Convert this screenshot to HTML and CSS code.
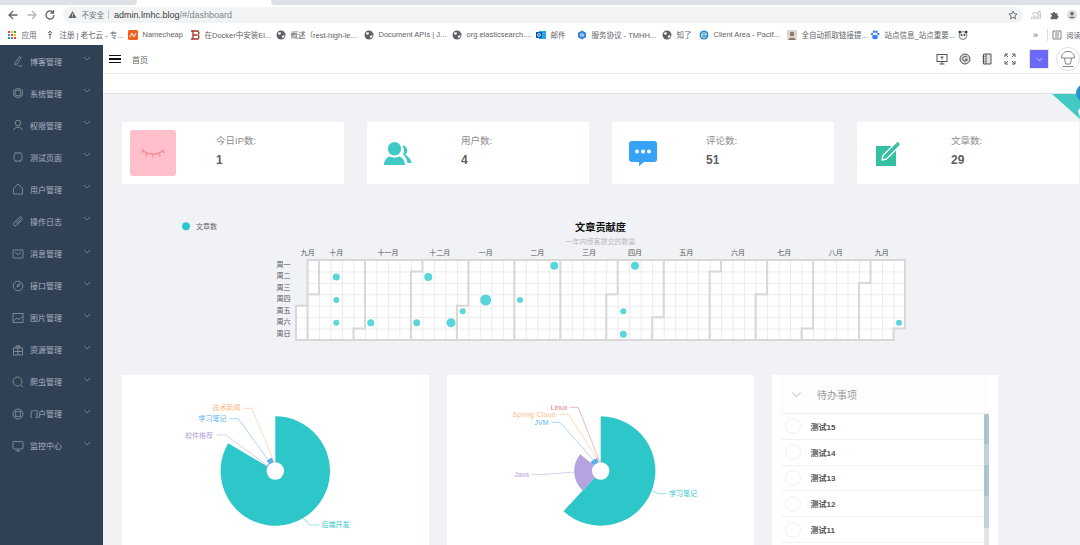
FILE: index.html
```html
<!DOCTYPE html>
<html lang="zh-CN">
<head>
<meta charset="utf-8">
<title>dashboard</title>
<link rel="stylesheet" href="styles.css">
</head>
<body>
<svg class="defs" width="0" height="0" aria-hidden="true">
  <symbol id="globe" viewBox="0 0 10 10"><circle cx="5" cy="5" r="4.5" fill="#5f6368"/><path d="M2 3l2-1 1 1-1 2-2-1zM6 6l2-1 .5 1.5L6.500 8.500z" fill="#fff"/></symbol>
  <symbol id="chev" viewBox="0 0 8 5"><path d="M1 1l3 3 3-3" fill="none" stroke="currentColor" stroke-width=".8"/></symbol>
</svg>

<div class="tabs"><div class="tab-off left"></div><div class="tab-on"></div><div class="tab-off right"></div></div>

<div class="toolbar">
  <svg class="nav" viewBox="0 0 12 12"><path d="M10.500 6H2M6 2 2 6l4 4" fill="none" stroke="#5f6368" stroke-width="1.300"/></svg>
  <svg class="nav" viewBox="0 0 12 12"><path d="M1.500 6H10M6 2l4 4-4 4" fill="none" stroke="#b4b7bb" stroke-width="1.300"/></svg>
  <svg class="nav" viewBox="0 0 12 12"><path d="M10 6a4 4 0 1 1-1.200-2.900M9.500 1v3h-3" fill="none" stroke="#5f6368" stroke-width="1.300"/></svg>
  <div class="omni">
    <svg class="warn" viewBox="0 0 10 10"><path d="M5 1l4.500 8h-9z" fill="#5f6368"/><path d="M5 4v2.500M5 7.300v.8" stroke="#fff" stroke-width=".8"/></svg>
    <span class="insecure">不安全</span><span class="url-sep"></span>
    <span class="url"><b>admin.lmhc.blog</b>/#/dashboard</span>
    <svg class="star" viewBox="0 0 10 10"><path d="M5 1l1.200 2.700 2.900.3-2.200 1.900.7 2.900L5 7.300 2.400 8.800l.7-2.900L.9 4l2.900-.3z" fill="none" stroke="#5f6368" stroke-width=".9"/></svg>
  </div>
  <svg class="ext" viewBox="0 0 12 12"><path d="M1 11V8M3.500 11V6M6 11V7M8.500 11V4M11 11V2M1 5l3-2 3 1 4-3" fill="none" stroke="#9aa0a6" stroke-width=".9"/></svg>
  <svg class="ext" viewBox="0 0 12 12"><path d="M2 4h2.500a1.500 1.500 0 0 1 3 0H10v2.500a1.500 1.500 0 0 1 0 3V11H2V8.500a1.500 1.500 0 0 0 0-3z" fill="#5f6368"/></svg>
  <svg class="ext" viewBox="0 0 12 12"><circle cx="6" cy="6" r="6" fill="#dadce0"/><circle cx="6" cy="4.500" r="2" fill="#5f6368"/><path d="M2.500 9.500c.5-2 6.500-2 7 0z" fill="#5f6368"/></svg>
</div>

<div class="bookmarks">
  <div class="bm"><svg class="bi" viewBox="0 0 10 10"><path d="M1 1h2v2H1z" fill="#ea4335"/><path d="M4 1h2v2H4z" fill="#fbbc04"/><path d="M7 1h2v2H7z" fill="#34a853"/><path d="M1 4h2v2H1z" fill="#4285f4"/><path d="M4 4h2v2H4z" fill="#ea4335"/><path d="M7 4h2v2H7z" fill="#fbbc04"/><path d="M1 7h2v2H1z" fill="#34a853"/><path d="M4 7h2v2H4z" fill="#4285f4"/><path d="M7 7h2v2H7z" fill="#ea4335"/></svg><span>应用</span></div>
  <div class="bm"><svg class="bi" viewBox="0 0 10 10"><path d="M5 1v8M3 3l2-2 2 2M3.500 4.500h3" fill="none" stroke="#666" stroke-width=".9"/></svg><span>注册 | 老七云 - 专...</span></div>
  <div class="bm"><svg class="bi" viewBox="0 0 10 10"><rect width="10" height="10" rx="1.500" fill="#f4601c"/><path d="M2 7l2-4 2 4 2-4" fill="none" stroke="#fff" stroke-width="1"/></svg><span>Namecheap</span></div>
  <div class="bm"><svg class="bi" viewBox="0 0 10 10"><path d="M1 1h7l1 2-1 2 1 2-1 2H1M3 1v8M3 5h4" fill="none" stroke="#a5332a" stroke-width="1.300"/></svg><span>在Docker中安装El...</span></div>
  <div class="bm"><svg class="bi"><use href="#globe"/></svg><span>概述（rest-high-le...</span></div>
  <div class="bm"><svg class="bi"><use href="#globe"/></svg><span>Document APIs | J...</span></div>
  <div class="bm"><svg class="bi"><use href="#globe"/></svg><span>org.elasticsearch....</span></div>
  <div class="bm"><svg class="bi" viewBox="0 0 10 10"><rect x="3" y="1" width="7" height="8" fill="#28a8ea"/><rect y="2" width="6" height="6" fill="#0a5ea8"/><circle cx="3" cy="5" r="1.400" fill="none" stroke="#fff" stroke-width=".8"/></svg><span>邮件</span></div>
  <div class="bm"><svg class="bi" viewBox="0 0 10 10"><path d="M5 .5l4 2.200v4.600L5 9.500 1 7.300V2.700z" fill="#3b82d8"/><path d="M5 3l2 1v2L5 7 3 6V4z" fill="#9cc6f2"/></svg><span>服务协议 - TMHH...</span></div>
  <div class="bm"><svg class="bi"><use href="#globe"/></svg><span>知了</span></div>
  <div class="bm"><svg class="bi" viewBox="0 0 10 10"><circle cx="5" cy="5" r="4.500" fill="#2d8fc7"/><path d="M2.500 5h5M7.500 5a2.500 2.500 0 1 0-.8 2" fill="none" stroke="#fff" stroke-width=".9"/></svg><span>Client Area - Pacif...</span></div>
  <div class="bm"><svg class="bi" viewBox="0 0 10 10"><rect width="10" height="10" fill="#ddd5cf"/><circle cx="5" cy="4" r="2.200" fill="#8f7468"/><path d="M1.500 10c0-3 7-3 7 0z" fill="#8f7468"/></svg><span>全自动抓取链接提...</span></div>
  <div class="bm"><svg class="bi" viewBox="0 0 10 10"><g fill="#3d7ff5"><circle cx="2" cy="4" r="1.200"/><circle cx="4" cy="1.800" r="1.200"/><circle cx="6.500" cy="1.800" r="1.200"/><circle cx="8.300" cy="4" r="1.200"/><ellipse cx="5" cy="7" rx="2.800" ry="2.300"/></g></svg><span>站点信息_站点重要...</span></div>
  <div class="bm"><svg class="bi" viewBox="0 0 10 10"><circle cx="5" cy="5.500" r="4" fill="#eee" stroke="#555" stroke-width=".7"/><circle cx="1.800" cy="2" r="1.300" fill="#333"/><circle cx="8.200" cy="2" r="1.300" fill="#333"/><circle cx="3.500" cy="5" r=".9" fill="#333"/><circle cx="6.500" cy="5" r=".9" fill="#333"/></svg></div>
  <div class="bm more">»</div>
  <div class="bm-sep"></div>
  <div class="bm reader"><svg class="bi" viewBox="0 0 10 10"><path d="M1 1h8v8H1zM3 3h4M3 5h4M3 7h4" fill="none" stroke="#5f6368" stroke-width=".8"/></svg><span>阅读</span></div>
</div>

<div class="app">
  <nav class="sidebar">
    <a class="item"><svg class="mi" viewBox="0 0 12 12"><path d="M3 8l4.500-6.500 1.600 1.100L5 9l-2 1zM6 11h4" /></svg><span>博客管理</span><svg class="ch"><use href="#chev"/></svg></a>
    <a class="item"><svg class="mi" viewBox="0 0 12 12"><path d="M6 1l4.300 2.500v5L6 11 1.700 8.500v-5z"/><circle cx="6" cy="6" r="3"/></svg><span>系统管理</span><svg class="ch"><use href="#chev"/></svg></a>
    <a class="item"><svg class="mi" viewBox="0 0 12 12"><circle cx="6" cy="4" r="2.800"/><path d="M1.500 11c.5-3.500 8.500-3.500 9 0"/></svg><span>权限管理</span><svg class="ch"><use href="#chev"/></svg></a>
    <a class="item"><svg class="mi" viewBox="0 0 12 12"><rect x="2" y="2" width="8" height="8" rx="2.500"/><path d="M4 .8v1.200M8 .8v1.200M4 10v1.200M8 10v1.200"/></svg><span>测试页面</span><svg class="ch"><use href="#chev"/></svg></a>
    <a class="item"><svg class="mi" viewBox="0 0 12 12"><path d="M1.500 5.500L6 1l4.500 4.500V11h-9z"/></svg><span>用户管理</span><svg class="ch"><use href="#chev"/></svg></a>
    <a class="item"><svg class="mi" viewBox="0 0 12 12"><path d="M2 8l5-5.500a1.800 1.800 0 0 1 2.600 2.500L4.500 10.300A1.500 1.500 0 0 1 2 8zM4 8l4-4.500M5.500 9L9 5"/></svg><span>操作日志</span><svg class="ch"><use href="#chev"/></svg></a>
    <a class="item"><svg class="mi" viewBox="0 0 12 12"><rect x="1" y="2" width="10" height="8" rx=".5"/><path d="M3 4.500l3 2 3-2"/></svg><span>消息管理</span><svg class="ch"><use href="#chev"/></svg></a>
    <a class="item"><svg class="mi" viewBox="0 0 12 12"><circle cx="6" cy="6" r="4.800"/><path d="M5 7l.8-2.500L8 3.500 7.200 6z"/></svg><span>接口管理</span><svg class="ch"><use href="#chev"/></svg></a>
    <a class="item"><svg class="mi" viewBox="0 0 12 12"><rect x="1" y="1.500" width="10" height="9"/><path d="M1.500 9L5 6l2 1.500 3.500-3"/></svg><span>图片管理</span><svg class="ch"><use href="#chev"/></svg></a>
    <a class="item"><svg class="mi" viewBox="0 0 12 12"><rect x="1.500" y="4" width="9" height="7"/><path d="M4 4V2h4v2M6 1.500V11M1.500 7.500h9"/></svg><span>资源管理</span><svg class="ch"><use href="#chev"/></svg></a>
    <a class="item"><svg class="mi" viewBox="0 0 12 12"><circle cx="5.500" cy="5.500" r="4.500"/><path d="M9 9l2 2"/></svg><span>爬虫管理</span><svg class="ch"><use href="#chev"/></svg></a>
    <a class="item"><svg class="mi" viewBox="0 0 12 12"><circle cx="6" cy="6" r="5"/><circle cx="6" cy="6" r="2.800"/><path d="M2.500 2.500l1.500 1.500M9.500 2.500L8 4M2.500 9.500L4 8M9.500 9.500L8 8"/></svg><span>门户管理</span><svg class="ch"><use href="#chev"/></svg></a>
    <a class="item"><svg class="mi" viewBox="0 0 12 12"><rect x="1" y="1.500" width="10" height="7.500" rx="1"/><path d="M6 9v2M3.500 11h5"/></svg><span>监控中心</span><svg class="ch"><use href="#chev"/></svg></a>
  </nav>

  <main class="main">
    <header class="topbar">
      <div class="burger"><i></i><i></i><i></i></div>
      <span class="crumb">首页</span>
      <div class="tools">
        <svg class="tool" viewBox="0 0 12 12"><rect x="1" y="1.500" width="10" height="7" /><path d="M6 8.500V11M3.500 11h5M4.500 4h3M6 4v2.500"/></svg>
        <svg class="tool" viewBox="0 0 12 12"><circle cx="6" cy="6" r="5" fill="#d8d8d8"/><path d="M8 4.300A2.400 2.400 0 1 0 8.400 6.300H6"/></svg>
        <svg class="tool" viewBox="0 0 12 12"><path d="M2.500 1h7.500v10H2.500z" fill="#e4e4e4"/><path d="M1.500 3.500h2M1.500 6h2M1.500 8.500h2M5 1v10"/></svg>
        <svg class="tool" viewBox="0 0 12 12"><path d="M1 4V1h3M4 4L1.500 1.500M8 1h3v3M8 4l2.500-2.500M1 8v3h3M4 8l-2.500 2.500M11 8v3H8M8 8l2.500 2.500"/></svg>
        <div class="drop"><svg class="drop-ch"><use href="#chev"/></svg></div>
        <svg class="avatar" viewBox="0 0 24 24"><circle cx="12" cy="12" r="11.500" fill="#fff" stroke="#d8d8d8" stroke-width=".8"/><path d="M5.500 11C6 5.500 9 4.500 12 4.500s6 1 6.500 6.500zM8.500 11l1 6h5l1-6M6.500 19.500h11" fill="none" stroke="#777" stroke-width=".9"/></svg>
      </div>
    </header>
    <div class="tagsbar"></div>

    <svg class="corner" viewBox="0 0 28 40"><path d="M0 11h28v25z" fill="#42c9c4"/><circle cx="33" cy="10" r="9" fill="#2e8fd0"/><path d="M26 28l2-3v9z" fill="#fff"/></svg>

    <div class="content">
      <section class="cards">
        <article class="card">
          <div class="tile pink"><svg class="lash" viewBox="0 0 24 10"><path d="M1 1.500c5 6 17 6 22 0M6 5L5 8.500M12 6.500v3M18 5l1 3.500M2.500 3L.5 5M21.500 3l2 2" fill="none" stroke="#f98a9b" stroke-width="1.300"/></svg></div>
          <div class="info"><span class="lbl">今日IP数:</span><b class="val">1</b></div>
        </article>
        <article class="card">
          <div class="tile"><svg class="ico" viewBox="0 0 28 23"><circle cx="10.500" cy="6.800" r="6.700" fill="#40c9c6"/><path d="M0 23c0-3 1.500-7 5.500-8.500 3 1.500 7 1.500 10 0 4 1.500 5.500 5.500 5.500 8.500z" fill="#40c9c6"/><path d="M18 3.500a5 5 0 0 1 3 9.200c3.500 1.300 6 5 6.800 8.300H23.500c-.5-3.500-2-6.500-4.500-8.200 1.500-2.500 1.500-6.500-1-9.300z" fill="#40c9c6"/></svg></div>
          <div class="info"><span class="lbl">用户数:</span><b class="val">4</b></div>
        </article>
        <article class="card">
          <div class="tile"><svg class="ico" viewBox="0 0 28 25"><path d="M3 0h22a3 3 0 0 1 3 3v15a3 3 0 0 1-3 3H15l-5 4v-4H3a3 3 0 0 1-3-3V3a3 3 0 0 1 3-3z" fill="#36a3f7"/><circle cx="8" cy="10.500" r="2" fill="#fff"/><circle cx="14" cy="10.500" r="2" fill="#fff"/><circle cx="20" cy="10.500" r="2" fill="#fff"/></svg></div>
          <div class="info"><span class="lbl">评论数:</span><b class="val">51</b></div>
        </article>
        <article class="card">
          <div class="tile"><svg class="ico" viewBox="0 0 24 25"><path d="M0 5h20v20H0z" fill="#34bfa3"/><path d="M7 14.500L20 1.500l3.500 3.500-13 13-4.500 1.200z" fill="#34bfa3" stroke="#fff" stroke-width="1.300" stroke-linejoin="round"/><path d="M20 2.500l2.500 2.500L24 3.300 21.700.8z" fill="#34bfa3"/></svg></div>
          <div class="info"><span class="lbl">文章数:</span><b class="val">29</b></div>
        </article>
      </section>

      <svg class="calendar" viewBox="122 205 958 145">
        <defs>
          <pattern id="cell" patternUnits="userSpaceOnUse" x="296" y="260" width="11.490" height="11.430">
            <rect width="11.490" height="11.430" fill="#fff"/>
            <path d="M.5 0V11.430M0 .5H11.490" stroke="#ebebeb" stroke-width="1" fill="none"/>
          </pattern>
        </defs>
        <circle cx="186" cy="226.300" r="4" fill="#2ec7c9"/>
        <text class="t-leg" x="196" y="228.800">文章数</text>
        <text class="t-title" x="600.500" y="231" text-anchor="middle">文章贡献度</text>
        <text class="t-sub" x="600.500" y="243.500" text-anchor="middle">一年内博客提交的数量</text>
        <g class="t-axis" text-anchor="middle">
          <text x="307.700" y="255">九月</text><text x="336.300" y="255">十月</text><text x="388" y="255">十一月</text><text x="439.700" y="255">十二月</text><text x="485.700" y="255">一月</text><text x="537.300" y="255">二月</text><text x="589" y="255">三月</text><text x="635" y="255">四月</text><text x="686.300" y="255">五月</text><text x="738" y="255">六月</text><text x="784.300" y="255">七月</text><text x="835.700" y="255">八月</text><text x="881.700" y="255">九月</text>
          <text x="283.500" y="267">周一</text><text x="283.500" y="278.400">周二</text><text x="283.500" y="289.900">周三</text><text x="283.500" y="301.300">周四</text><text x="283.500" y="312.800">周五</text><text x="283.500" y="324.200">周六</text><text x="283.500" y="335.800">周日</text>
        </g>
        <path d="M307.500 260H905V328.600H893.500V340H296V305.700H307.500Z" fill="url(#cell)"/>
        <path class="cal-lines" d="M307.500 260H905V328.600H893.500V340H296V305.700H307.500ZM319 260V294.300H307.500V340M365 260V328.600H353.500V340M422.400 260V271.400H410.900V340M468.400 260V305.700H456.900V340M514.300 260V340M560.300 260V340M617.700 260V294.300H606.200V340M663.700 260V317.200H652.200V340M721.100 260V271.400H709.600V340M767.100 260V294.300H755.600V340M813.100 260V328.600H801.600V340M870.500 260V282.900H859V340"/>
        <g fill="#5ad5d9">
          <circle cx="554.300" cy="265.700" r="4"/><circle cx="635" cy="265.700" r="4"/>
          <circle cx="336.300" cy="277" r="3.500"/><circle cx="428.300" cy="277" r="4"/>
          <circle cx="336.300" cy="300" r="3"/><circle cx="485.700" cy="300" r="5.500"/><circle cx="520" cy="300" r="3"/>
          <circle cx="462.700" cy="311.300" r="3"/><circle cx="623.300" cy="311.300" r="3"/>
          <circle cx="336.300" cy="322.700" r="3"/><circle cx="370.700" cy="322.700" r="3.500"/><circle cx="416.700" cy="322.700" r="3.500"/><circle cx="451" cy="322.700" r="4.500"/><circle cx="899" cy="322.700" r="3"/>
          <circle cx="623.300" cy="334.300" r="3.500"/>
        </g>
      </svg>

      <section class="panels">
        <div class="panel">
          <svg class="pie" viewBox="122 375 307 170">
            <path d="M275.300 471L275.300 416.300A54.700 54.700 0 1 1 228.170 443.240Z" fill="#2ec7c9"/>
            <path d="M275.300 471L266.680 465.930A10 10 0 0 1 268.870 463.340Z" fill="#b6a2de"/>
            <path d="M275.300 471L266.620 460.660A13.500 13.500 0 0 1 272.260 457.850Z" fill="#5ab1ef"/>
            <path d="M275.300 471L273.050 461.260A10 10 0 0 1 275.300 461Z" fill="#ffb980"/>
            <circle cx="275.300" cy="471" r="8.700" fill="#fff"/>
            <path class="ln" stroke="#ffb980" d="M243.300 408.300H251.700L274 461.700"/>
            <path class="ln" stroke="#5ab1ef" d="M229.300 418.700H238.300L267.300 459"/>
            <path class="ln" stroke="#b6a2de" d="M216.700 435H225.700L266.700 465.300"/>
            <path class="ln" stroke="#2ec7c9" d="M303.300 518.300L310 525H319.300"/>
            <text class="t-pie" fill="#ffb980" x="240.500" y="410" text-anchor="end">技术新闻</text>
            <text class="t-pie" fill="#5ab1ef" x="226.500" y="421" text-anchor="end">学习笔记</text>
            <text class="t-pie" fill="#b6a2de" x="213" y="437.500" text-anchor="end">软件推荐</text>
            <text class="t-pie" fill="#2ec7c9" x="321.500" y="527">后端开发</text>
          </svg>
        </div>
        <div class="panel">
          <svg class="pie" viewBox="447 375 307 170">
            <path d="M600.700 471L600.700 416.300A54.700 54.700 0 1 1 563.550 511.150Z" fill="#2ec7c9"/>
            <path d="M600.700 471L582.700 490.450A26.500 26.500 0 0 1 580.200 454.170Z" fill="#b6a2de"/>
            <path d="M600.700 471L590.260 462.430A13.500 13.500 0 0 1 597.200 457.960Z" fill="#5ab1ef"/>
            <path d="M600.700 471L598.110 461.340A10 10 0 0 1 599.650 461.050Z" fill="#ffb980"/>
            <path d="M600.700 471L599.710 461.550A9.500 9.500 0 0 1 600.700 461.500Z" fill="#d87a80"/>
            <circle cx="600.700" cy="471" r="8.700" fill="#fff"/>
            <path class="ln" stroke="#d87a80" d="M570 407.300H578.300L599.300 461"/>
            <path class="ln" stroke="#ffb980" d="M559.300 414.300H568.300L598.300 461"/>
            <path class="ln" stroke="#5ab1ef" d="M551 422.300H560L593.300 460"/>
            <path class="ln" stroke="#b6a2de" d="M531.700 474.700H540L575 472"/>
            <path class="ln" stroke="#2ec7c9" d="M652.300 490.700L658.300 493.700H666.700"/>
            <text class="t-pie" fill="#d87a80" x="567.500" y="410" text-anchor="end">Linux</text>
            <text class="t-pie t-wide" fill="#ffb980" x="556" y="416.700" text-anchor="end">Spring Cloud</text>
            <text class="t-pie" fill="#5ab1ef" x="548.500" y="424.700" text-anchor="end">JVM</text>
            <text class="t-pie" fill="#b6a2de" x="529" y="477" text-anchor="end">Java</text>
            <text class="t-pie" fill="#2ec7c9" x="669" y="496.300">学习笔记</text>
          </svg>
        </div>
        <div class="panel todo">
          <div class="todo-head"><svg class="todo-ch"><use href="#chev"/></svg><span>待办事项</span></div>
          <div class="todo-body">
            <ul class="todo-list">
              <li><i class="ring"></i><span>测试15</span></li>
              <li><i class="ring"></i><span>测试14</span></li>
              <li><i class="ring"></i><span>测试13</span></li>
              <li><i class="ring"></i><span>测试12</span></li>
              <li><i class="ring"></i><span>测试11</span></li>
            </ul>
            <div class="scroll"><div class="thumb"></div></div>
          </div>
        </div>
      </section>
    </div>
  </main>
</div>
</body>
</html>
```

FILE: styles.css
```css
* { box-sizing: border-box; }
html, body { margin: 0; height: 545px; overflow: hidden; }
body {
  width: 1080px;
  display: flex;
  flex-direction: column;
  background: #fff;
  font-family: "Liberation Sans", "Noto Sans CJK SC", sans-serif;
}
.defs { position: absolute; }

/* browser chrome */
.tabs { display: flex; height: 5px; flex: none; background: #fff; }
.tab-off { background: #dee1e6; }
.tab-off.left { width: 137px; border-bottom-right-radius: 4px; }
.tab-on { width: 134px; background: #fff; }
.tab-off.right { flex: 1; border-bottom-left-radius: 4px; }

.toolbar { height: 19px; flex: none; display: flex; align-items: center; padding-left: 7px; }
.nav { width: 12px; height: 12px; margin-right: 6.500px; flex: none; }
.omni {
  width: 960px;
  height: 16px;
  background: #f1f3f4;
  border-radius: 8px;
  display: flex;
  align-items: center;
  padding: 0 5px;
  flex: none;
}
.warn { width: 9px; height: 9px; }
.insecure { font-size: 7.500px; color: #6f7377; margin-left: 5px; }
.url-sep { width: 1px; height: 9px; background: #c4c7ca; margin: 0 5px 0 4px; }
.url { font-size: 9px; color: #80868b; }
.url b { font-weight: 400; color: #3c4043; }
.star { width: 10px; height: 10px; margin-left: auto; }
.ext { width: 10px; height: 10px; margin-left: 8px; flex: none; }

.bookmarks {
  height: 21px;
  flex: none;
  display: grid;
  grid-template-columns: 38px 83px 62px 86px 88px 88px 84px 41px 85px 37px 88px 83px 88px 75px 14px 5px 28px;
  align-items: center;
  padding-left: 7px;
  background: #fff;
  white-space: nowrap;
  overflow: hidden;
}
.bm { display: flex; align-items: center; gap: 4.500px; font-size: 7.500px; color: #5f6368; min-width: 0; }
.bi { width: 10px; height: 10px; flex: none; }
.more { font-size: 9px; }
.reader { font-size: 7px; }
.bm-sep { width: 1px; height: 12px; background: #dadce0; }

/* app */
.app { flex: 1; display: flex; min-height: 0; }
.sidebar { width: 103px; flex: none; background: #304156; }
.item { height: 32.080px; display: flex; align-items: center; padding: 0 12px; color: #a8b3c0; font-size: 8px; }
.mi { width: 12px; height: 12px; flex: none; margin-right: 6px; fill: none; stroke: #8c98a6; stroke-width: .8; }
.ch { width: 8px; height: 5px; margin-left: auto; margin-bottom: 5px; color: #7f8c9b; flex: none; }

.main { flex: 1; min-width: 0; position: relative; display: flex; flex-direction: column; background: #f0f2f5; overflow: hidden; }
.topbar { height: 29px; flex: none; background: #fff; border-bottom: 1px solid #e8e8e8; display: flex; align-items: center; padding-left: 6px; }
.burger { width: 12px; display: flex; flex-direction: column; gap: 2px; }
.burger i { height: 1.500px; background: #111; }
.crumb { font-size: 8px; color: #666; margin-left: 11px; }
.tools { margin-left: auto; display: flex; align-items: center; }
.tool { width: 12px; height: 12px; margin-right: 10.500px; fill: none; stroke: #555; stroke-width: 1; }
.drop { width: 20px; height: 20px; margin-left: 3px; background: #6c68f9; border: 1px solid #e6e6e6; display: flex; align-items: center; justify-content: center; }
.drop-ch { width: 7px; height: 5px; color: #fff; }
.avatar { width: 24px; height: 24px; margin-left: 7px; flex: none; }
.tagsbar { height: 20px; flex: none; background: #fff; border-bottom: 1px solid #dfe1e5; }
.corner { position: absolute; right: 0; top: 38px; width: 28px; height: 40px; }

.content { padding: 28px 0 0 19px; }
.cards { display: grid; grid-template-columns: repeat(4, 222px); column-gap: 23px; }
.card { height: 62px; background: #fff; display: flex; padding: 8px; }
.tile { width: 46px; height: 46px; flex: none; border-radius: 3px; display: flex; align-items: center; justify-content: center; }
.pink { background: #ffc0cb; }
.lash { width: 24px; height: 10px; }
.ico { width: 28px; height: 25px; }
.info { margin-left: 40px; display: flex; flex-direction: column; padding-top: 4px; }
.lbl { font-size: 9.500px; line-height: 14px; color: #8c8c8c; }
.val { font-size: 12px; line-height: 14px; margin-top: 5px; color: #5f5f5f; }

.calendar { display: block; width: 958px; height: 145px; margin-top: 21px; }
.t-leg { font-size: 7px; fill: #666; }
.t-title { font-size: 10.200px; font-weight: 700; fill: #111; }
.t-sub { font-size: 7px; fill: #bbb; }
.t-axis { font-size: 7px; fill: #555; }
.cal-lines { fill: none; stroke: #d8d8d8; stroke-width: 2; }

.panels { display: grid; grid-template-columns: 307px 307px 226px; column-gap: 18px; margin-top: 25px; }
.panel { background: #fff; height: 175px; }
.pie { display: block; width: 307px; height: 170px; }
.ln { fill: none; stroke-width: .7; stroke-opacity: .75; }
.t-pie { font-size: 7px; }
.t-wide { letter-spacing: .25px; }

.todo { padding: 0 9px; }
.todo-head { height: 39px; display: flex; align-items: center; border-bottom: 1px solid #eee; padding-left: 10px; color: #999; font-size: 10px; background: #fdfdfd; }
.todo-ch { width: 11px; height: 7px; color: #d0d0d0; margin-right: 15px; }
.todo-body { display: flex; height: 140px; }
.todo-list { list-style: none; margin: 0; padding: 0; flex: 1; min-width: 0; }
.todo-list li { height: 25.800px; border-bottom: 1px solid #f2f2f2; display: flex; align-items: center; padding-left: 4px; font-size: 8px; font-weight: 700; color: #555; }
.ring { width: 16px; height: 16px; border: 1px solid #f0f0f0; border-radius: 50%; margin-right: 9.500px; flex: none; }
.scroll { width: 5px; background: #e4e4e4; flex: none; }
.thumb { height: 114px; border-radius: 2px 2px 0 0; background: linear-gradient(#acc4cf 0 26%, #c0d2da 26% 45%, #acc4cf 45% 72%, #c0d2da 72%); }
```
